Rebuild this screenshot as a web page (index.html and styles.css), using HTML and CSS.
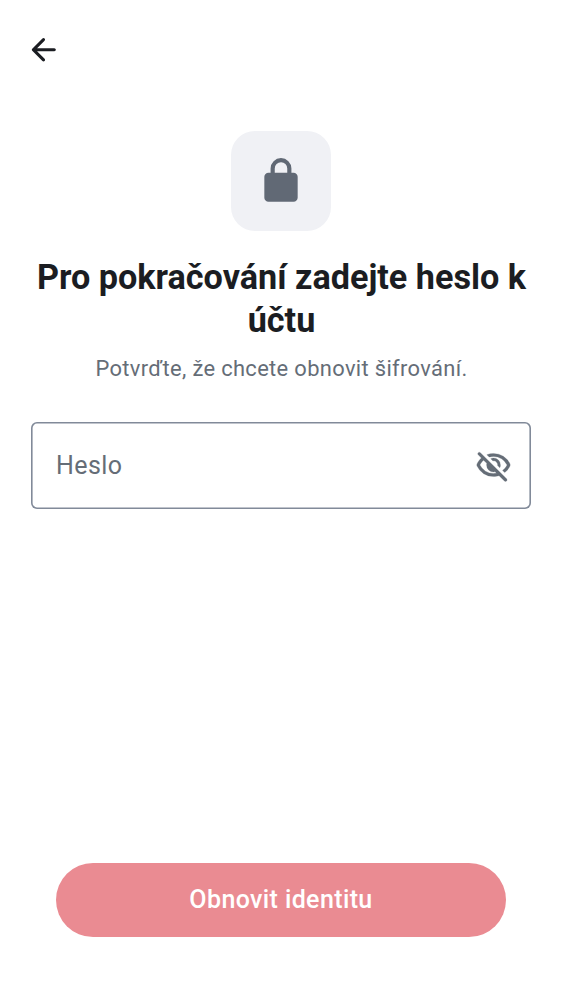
FILE: index.html
```html
<!DOCTYPE html>
<html lang="cs">
<head>
<meta charset="utf-8">
<title>Obnovit identitu</title>
<link rel="stylesheet" href="styles.css">
</head>
<body>
<div class="screen">
  <header class="topbar">
    <button class="back" aria-label="Zpět"><svg viewBox="0 0 24 24"><path d="m7.825 13 4.9 4.9q.3.3.287.7a1.02 1.02 0 0 1-.312.7q-.3.275-.7.287a.93.93 0 0 1-.7-.287l-6.6-6.6a.9.9 0 0 1-.213-.325A1.1 1.1 0 0 1 4.426 12q0-.2.063-.375A.9.9 0 0 1 4.7 11.3l6.6-6.6a.95.95 0 0 1 .688-.275q.413 0 .712.275.3.3.3.713 0 .412-.3.712L7.825 11H19q.424 0 .712.287.288.288.288.713 0 .424-.288.713A.97.97 0 0 1 19 13z"/></svg></button>
  </header>
  <main class="content">
    <div class="lock"><svg viewBox="0 0 24 24"><path d="M6 22q-.824 0-1.412-.587A1.93 1.93 0 0 1 4 20V10q0-.825.588-1.412A1.93 1.93 0 0 1 6 8h1V6q0-2.075 1.463-3.537Q9.926 1 12 1q2.075 0 3.537 1.463Q17 3.925 17 6v2h1q.824 0 1.413.588Q20 9.175 20 10v10q0 .824-.587 1.413A1.93 1.93 0 0 1 18 22zM9 8h6V6q0-1.25-.875-2.125A2.9 2.9 0 0 0 12 3q-1.25 0-2.125.875A2.9 2.9 0 0 0 9 6z"/></svg></div>
    <h1 class="title">Pro pokračování zadejte heslo k účtu</h1>
    <p class="subtitle">Potvrďte, že chcete obnovit šifrování.</p>
    <div class="field">
      <span class="label">Heslo</span>
      <svg class="eye" viewBox="0 0 24 24"><path d="m16.1 13.3-1.45-1.45q.225-1.175-.675-2.2t-2.325-.8L10.2 7.4q.424-.2.863-.3A4.2 4.2 0 0 1 12 7q1.875 0 3.188 1.313Q16.5 9.625 16.5 11.5q0 .5-.1.938t-.3.862m3.2 3.15-1.45-1.4a11 11 0 0 0 1.688-1.588A9 9 0 0 0 20.8 11.5q-1.25-2.524-3.588-4.012Q14.875 6 12 6q-.724 0-1.425.1a10 10 0 0 0-1.375.3L7.65 4.85A11.1 11.1 0 0 1 12 4q3.575 0 6.425 1.887T22.7 10.8a.8.8 0 0 1 .1.313q.025.188.025.387a2 2 0 0 1-.125.7 10.6 10.6 0 0 1-3.4 4.25m-.2 5.45-3.5-3.45q-.874.274-1.762.413Q12.95 19 12 19q-3.575 0-6.425-1.887T1.3 12.2a.8.8 0 0 1-.1-.312 3 3 0 0 1 0-.763.8.8 0 0 1 .1-.3Q1.825 9.7 2.55 8.75A13.3 13.3 0 0 1 4.15 7L2.075 4.9a.93.93 0 0 1-.275-.688q0-.412.3-.712a.95.95 0 0 1 .7-.275q.424 0 .7.275l17 17q.275.275.288.688a.93.93 0 0 1-.288.712.95.95 0 0 1-.7.275.95.95 0 0 1-.7-.275M5.55 8.4q-.725.65-1.325 1.425A9 9 0 0 0 3.2 11.5q1.25 2.524 3.587 4.012T12 17q.5 0 .975-.062.475-.063.975-.138l-.9-.95q-.274.075-.525.113A3.5 3.5 0 0 1 12 16q-1.875 0-3.188-1.312Q7.5 13.375 7.5 11.5q0-.274.037-.525.038-.25.113-.525z"/></svg>
    </div>
  </main>
  <footer class="footer"><button class="submit">Obnovit identitu</button></footer>
</div>
</body>
</html>
```
FILE: styles.css
```css
* { box-sizing: border-box; }
body { margin: 0; background: #fff; font-family: Roboto, sans-serif; }
.screen { width: 562px; height: 1000px; display: flex; flex-direction: column; }
.topbar { height: 100px; padding: 31px 25px; }
.back { display: block; width: 38px; height: 38px; padding: 0; border: 0; background: none; }
.back svg { display: block; width: 37px; height: 37.5px; fill: #1b1d22; }
.content { flex: 1; padding: 31px 31px 0; display: flex; flex-direction: column; align-items: center; }
.lock { width: 100px; height: 100px; border-radius: 24px; background: #f0f1f5; display: flex; align-items: center; justify-content: center; }
.lock svg { width: 50px; fill: #616975; }
.title { margin: 25px 0 0; padding-left: 1px; font-size: 34.2px; line-height: 43px; font-weight: 700; text-align: center; color: #1b1d22; }
.subtitle { margin: 13px 0 0; padding-left: 1px; font-size: 21.9px; line-height: 27px; letter-spacing: .34px; color: #656d77; }
.field { margin-top: 40px; width: 500px; height: 87px; box-shadow: inset 0 0 0 1.6px #818a99; border-radius: 6px; padding: 0 19px 0 25px; display: flex; align-items: center; justify-content: space-between; }
.label { font-size: 25px; letter-spacing: .4px; color: #656d77; }
.eye { width: 37px; height: 37.5px; fill: #656d77; stroke: #656d77; stroke-width: .15; }
.footer { padding: 0 56px 63px; }
.submit { display: block; width: 450px; height: 74.5px; padding: 0; border: 0; border-radius: 37.5px; background: #ea8b92; color: #fff; font: 500 25px/38px Roboto, sans-serif; letter-spacing: .38px; }
```
